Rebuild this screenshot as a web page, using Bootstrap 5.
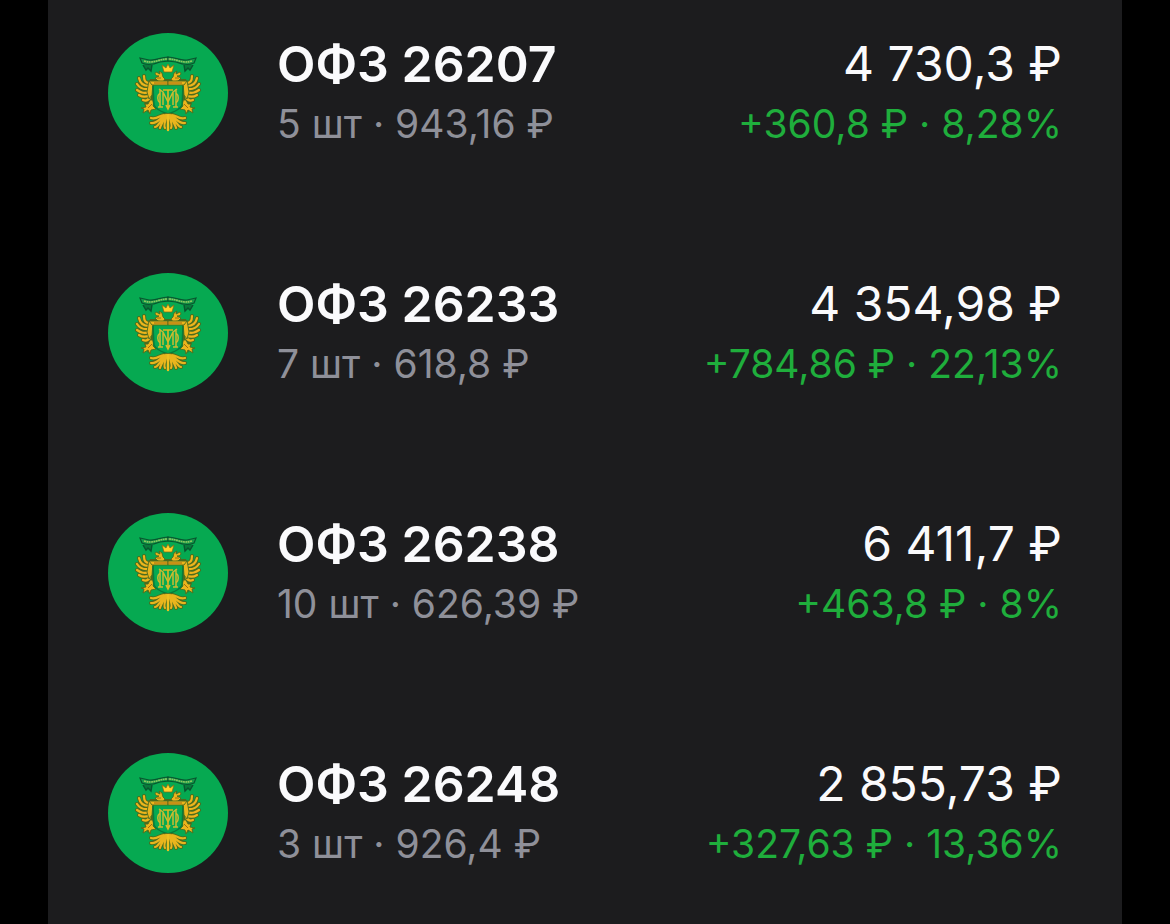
<!DOCTYPE html>
<html lang="ru">
<head>
<meta charset="utf-8">
<meta name="viewport" content="width=device-width, initial-scale=1">
<title>Облигации</title>
<link href="https://cdn.jsdelivr.net/npm/bootstrap@5.3.0/dist/css/bootstrap.min.css" rel="stylesheet">
<style>
body { background: #000; font-family: Inter, "Open Sans", sans-serif; }
.portfolio { background: #1c1c1e; margin: 0 48px; padding: 33px 60px 0; }
.holdings { gap: 120px; }
.holding { height: 120px; gap: 49px; }
.emblem { width: 120px; height: 120px; }
.bond-name, .bond-value { line-height: 62px; color: #fafafc; }
.bond-name { font-size: 50px; font-weight: 600; }
.bond-value { font-size: 48px; }
.bond-note, .bond-gain { font-size: 39px; line-height: 58px; }
.bond-note { color: #8f9099; }
.bond-gain { color: #1fae3c; }
</style>
</head>
<body>
<svg class="d-none" aria-hidden="true">
  <defs>
    <g id="half">
      <!-- ribbon -->
      <path d="M0 24C-8 24-11 28-19 27L-28 25L-26 30C-20 33-13 31-8 29L0 28Z" fill="#159a4a" stroke="#08562f" stroke-width="1.2"/>
      <path d="M-25 32L-22 37L-20 35L-17 38L-16 32" fill="#087b3b" stroke="#08562f" stroke-width="1.4"/>
      <path d="M-24 28C-14 31-10 26 0 26" fill="none" stroke="#8fc75f" stroke-width="1.6" stroke-dasharray="1.8 .6"/>
      <!-- body outline -->
      <path d="M-18 46H0V52H-14V72L-20 80L-24 70L-18 66Z" fill="#4c6c1e"/>
      <!-- wing feathers -->
      <g fill="none" stroke-linecap="round">
        <path d="M-19 50C-23 50-24 46-24 43M-19 53C-25 53-28 50-29 45M-19 56C-26 57-29 54-31 51M-18 59C-25 61-28 59-31 57M-18 62C-23 65-26 64-29 62M-18 64C-20 68-23 68-25 67" stroke="#4c6c1e" stroke-width="4"/>
        <path d="M-19 50C-23 50-24 46-24 43M-19 53C-25 53-28 50-29 45M-19 56C-26 57-29 54-31 51M-18 59C-25 61-28 59-31 57M-18 62C-23 65-26 64-29 62M-18 64C-20 68-23 68-25 67" stroke="#eeb51c" stroke-width="2.2"/>
      </g>
      <g fill="#ebb51c" stroke="#4c6c1e" stroke-width=".9" stroke-linejoin="round">
        <path d="M-19 47L-15 50L-16 62L-19 66L-21 59L-20 53Z"/>
        <path d="M-18 67C-15 66-14 70-15 73L-12 76L-17 77L-18 81L-20 77L-25 80L-24 76L-27 75L-22 74L-23 71L-20 71Z"/>
        <path d="M-12 39C-14 41-12 43-9 43L-13 45L-10 48L-5 49L-3 46L-5 44L-6 40L-9 38L-8 41Z"/>
        <path d="M-19 48H0V52H-16Z"/>
      </g>
      <path d="M-20 75L-16 71M-11 45L-7 45M-14 50H0" fill="none" stroke="#a26a10" stroke-width="1"/>
      <!-- shield edge -->
      <path d="M-15 53L-14 72C-11 78-5 79 0 81" fill="none" stroke="#087b3b" stroke-width="1.4"/>
      <!-- monogram -->
      <path d="M-8 56V74M-8 60C-11 62-11 68-8 70M-10 74H-5M-9 56L-5 59V72M-5 59L0 69" fill="none" stroke="#c9bb30" stroke-width="1.5"/>
      <!-- tail plumes -->
      <g fill="none" stroke-linecap="round">
        <path d="M-4 82C-8 82-11 87-17 85M-4 83C-9 86-11 91-17 90M-3 84C-8 88-10 94-13 94M-2 82C-4 87-8 93-8 95M-1 82C-3 88-4 94-3 95" stroke="#4c6c1e" stroke-width="4"/>
        <path d="M-4 82C-8 82-11 87-17 85M-4 83C-9 86-11 91-17 90M-3 84C-8 88-10 94-13 94M-2 82C-4 87-8 93-8 95M-1 82C-3 88-4 94-3 95" stroke="#e9b51d" stroke-width="2.2"/>
      </g>
    </g>
    <symbol id="arms" viewBox="0 0 120 120">
      <circle cx="60" cy="60" r="60" fill="#06a951"/>
      <use href="#half" transform="translate(60 0)"/>
      <use href="#half" transform="translate(60 0) scale(-1 1)"/>
      <path d="M56 39L54 32L58 35L60 31L62 35L66 32L64 39Z" fill="#ffd22b" stroke="#8a6610" stroke-width=".7"/>
      <path d="M60 82V97" stroke="#efbf20" stroke-width="2.4" stroke-linecap="round"/>
      <path d="M55 57H65M60 57V75M58 72L60 76L62 72" fill="none" stroke="#d9b925" stroke-width="1.6"/>
    </symbol>
  </defs>
</svg>
<main class="portfolio min-vh-100">
  <ul class="holdings list-unstyled d-flex flex-column mb-0">
    <li class="holding d-flex">
      <svg class="emblem flex-shrink-0" aria-hidden="true"><use href="#arms"/></svg>
      <div class="flex-grow-1">
        <div class="bond-name">ОФЗ 26207</div>
        <div class="bond-note">5 шт · 943,16 ₽</div>
      </div>
      <div class="text-end">
        <div class="bond-value">4 730,3 ₽</div>
        <div class="bond-gain">+360,8 ₽ · 8,28%</div>
      </div>
    </li>
    <li class="holding d-flex">
      <svg class="emblem flex-shrink-0" aria-hidden="true"><use href="#arms"/></svg>
      <div class="flex-grow-1">
        <div class="bond-name">ОФЗ 26233</div>
        <div class="bond-note">7 шт · 618,8 ₽</div>
      </div>
      <div class="text-end">
        <div class="bond-value">4 354,98 ₽</div>
        <div class="bond-gain">+784,86 ₽ · 22,13%</div>
      </div>
    </li>
    <li class="holding d-flex">
      <svg class="emblem flex-shrink-0" aria-hidden="true"><use href="#arms"/></svg>
      <div class="flex-grow-1">
        <div class="bond-name">ОФЗ 26238</div>
        <div class="bond-note">10 шт · 626,39 ₽</div>
      </div>
      <div class="text-end">
        <div class="bond-value">6 411,7 ₽</div>
        <div class="bond-gain">+463,8 ₽ · 8%</div>
      </div>
    </li>
    <li class="holding d-flex">
      <svg class="emblem flex-shrink-0" aria-hidden="true"><use href="#arms"/></svg>
      <div class="flex-grow-1">
        <div class="bond-name">ОФЗ 26248</div>
        <div class="bond-note">3 шт · 926,4 ₽</div>
      </div>
      <div class="text-end">
        <div class="bond-value">2 855,73 ₽</div>
        <div class="bond-gain">+327,63 ₽ · 13,36%</div>
      </div>
    </li>
  </ul>
</main>
</body>
</html>
